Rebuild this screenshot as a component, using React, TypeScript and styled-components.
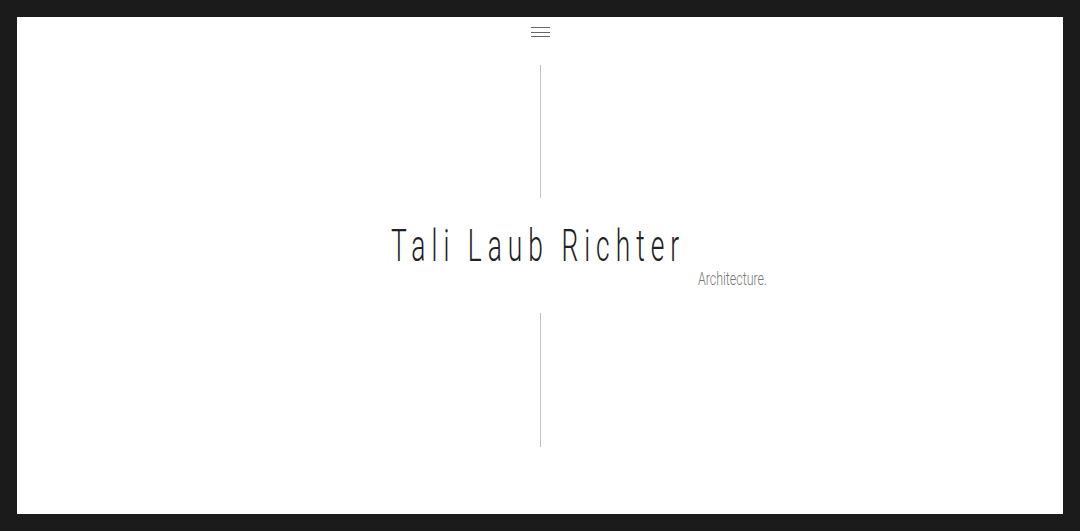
import React from "react";
import styled, { createGlobalStyle } from "styled-components";

const Global = createGlobalStyle`
  html, body { margin: 0; padding: 0; background: #1b1b1b; }
  * { box-sizing: border-box; }
`;

const Frame = styled.div`
  width: 1080px;
  height: 531px;
  padding: 17px;
  background: #1b1b1b;
`;

const Panel = styled.main`
  height: 100%;
  background: #ffffff;
  display: flex;
  flex-direction: column;
  align-items: center;
  padding-top: 10px;
`;

const Burger = styled.button`
  width: 19px;
  height: 10px;
  padding: 0;
  border: 0;
  background: transparent;
  display: flex;
  flex-direction: column;
  justify-content: space-between;
  cursor: pointer;
  margin-left: 1px;
`;

const BurgerLine = styled.span`
  display: block;
  height: 1px;
  width: 100%;
  background: #666;
`;

const Rule = styled.div<{ $h: number; $mt: number }>`
  width: 1px;
  height: ${(p) => p.$h}px;
  margin-top: ${(p) => p.$mt}px;
  background: #c4c4c4;
`;

const TitleBlock = styled.div`
  width: 376px;
  height: 115px;
  margin-left: 78px;
  display: flex;
  flex-direction: column;
  align-items: flex-start;
  padding-top: 22px;
`;

const Title = styled.h1`
  margin: 0;
  font-family: Roboto, "Liberation Sans", sans-serif;
  font-weight: 300;
  font-size: 44px;
  line-height: 52px;
  letter-spacing: 10px;
  color: #222;
  white-space: nowrap;
  transform: scaleX(0.6);
  transform-origin: left center;
`;

const Sub = styled.div`
  align-self: flex-end;
  margin-top: -4px;
  font-family: Roboto, "Liberation Sans", sans-serif;
  font-weight: 300;
  font-size: 18px;
  letter-spacing: 0;
  color: #777;
  white-space: nowrap;
  transform: scaleX(0.69);
  transform-origin: right center;
`;

export default function App() {
  return (
    <>
      <Global />
      <Frame>
        <Panel>
          <Burger aria-label="menu">
            <BurgerLine />
            <BurgerLine />
            <BurgerLine />
          </Burger>
          <Rule $h={133} $mt={28} />
          <TitleBlock>
            <Title>Tali Laub Richter</Title>
            <Sub>Architecture.</Sub>
          </TitleBlock>
          <Rule $h={134} $mt={0} />
        </Panel>
      </Frame>
    </>
  );
}
